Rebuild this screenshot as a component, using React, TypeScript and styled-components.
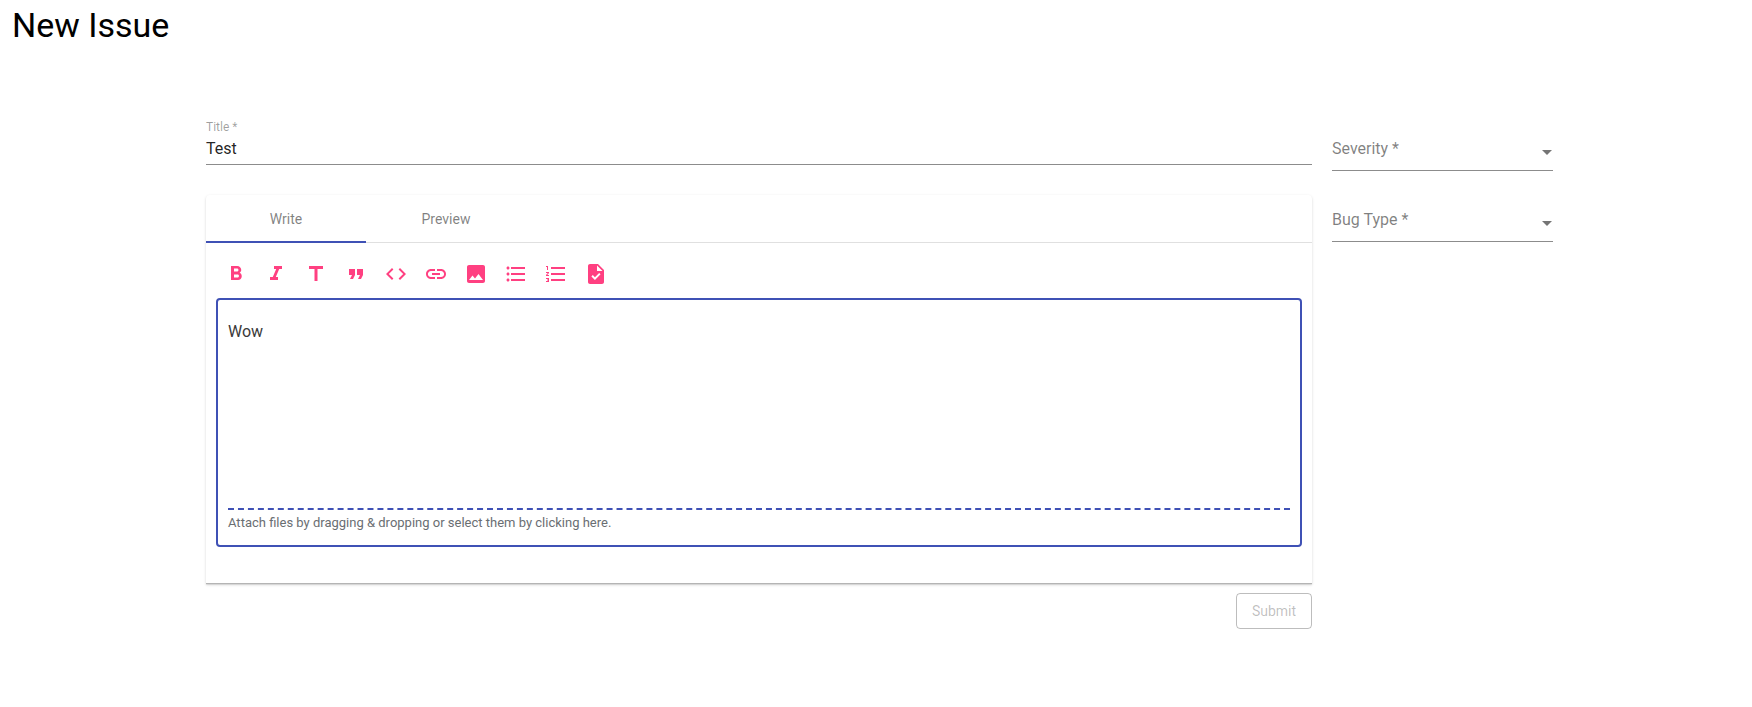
import React from "react";
import styled, { createGlobalStyle } from "styled-components";
import {
  MdFormatBold,
  MdFormatItalic,
  MdTitle,
  MdFormatQuote,
  MdCode,
  MdLink,
  MdImage,
  MdFormatListBulleted,
  MdFormatListNumbered,
  MdTask,
  MdArrowDropDown,
} from "react-icons/md";

const GlobalStyle = createGlobalStyle`
  html, body {
    margin: 0;
    padding: 0;
    background: #fff;
    font-family: Roboto, "Liberation Sans", sans-serif;
  }
`;

const tools = [
  MdFormatBold,
  MdFormatItalic,
  MdTitle,
  MdFormatQuote,
  MdCode,
  MdLink,
  MdImage,
  MdFormatListBulleted,
  MdFormatListNumbered,
  MdTask,
];

export default function App() {
  return (
    <SPage>
      <GlobalStyle />
      <SHeading>New Issue</SHeading>
      <SForm>
        <SMain>
          <STitleField>
            <STitleLabel>Title *</STitleLabel>
            <STitleValue>Test</STitleValue>
          </STitleField>
          <SCard>
            <STabs>
              <STab $active>Write</STab>
              <STab>Preview</STab>
            </STabs>
            <SToolbar>
              {tools.map((Icon, i) => (
                <SToolButton key={i}>
                  <Icon size={24} />
                </SToolButton>
              ))}
            </SToolbar>
            <SEditor>
              <SEditorText>Wow</SEditorText>
              <SAttach>Attach files by dragging &amp; dropping or select them by clicking here.</SAttach>
            </SEditor>
          </SCard>
          <SActions>
            <SSubmit disabled>Submit</SSubmit>
          </SActions>
        </SMain>
        <SSide>
          <SSelect>
            <span>Severity *</span>
            <MdArrowDropDown size={24} />
          </SSelect>
          <SSelect>
            <span>Bug Type *</span>
            <MdArrowDropDown size={24} />
          </SSelect>
        </SSide>
      </SForm>
    </SPage>
  );
}

const SPage = styled.div`
  width: 1752px;
  height: 707px;
  overflow: hidden;
`;

const SHeading = styled.h1`
  margin: 0;
  padding: 5px 0 0 12px;
  font-size: 34px;
  font-weight: 400;
  line-height: 40px;
  color: #000;
`;

const SForm = styled.div`
  display: flex;
  gap: 20px;
  margin-top: 73px;
  padding-left: 206px;
`;

const SMain = styled.div`
  width: 1106px;
`;

const STitleField = styled.div`
  height: 47px;
  padding-top: 2px;
  border-bottom: 1px solid #8c8c8c;
  box-sizing: border-box;
`;

const STitleLabel = styled.div`
  font-size: 12px;
  line-height: 14px;
  color: rgba(0, 0, 0, 0.38);
`;

const STitleValue = styled.div`
  margin-top: 5px;
  font-size: 16px;
  line-height: 19px;
  color: rgba(0, 0, 0, 0.87);
`;

const SCard = styled.div`
  margin-top: 30px;
  height: 389px;
  box-sizing: border-box;
  background: #fff;
  box-shadow: 0 1px 3px rgba(0, 0, 0, 0.14), 0 1px 1px rgba(0, 0, 0, 0.08);
  border-radius: 4px 4px 0 0;
  border-bottom: 1px solid #b4b4b4;
`;

const STabs = styled.div`
  display: flex;
  height: 48px;
  box-sizing: border-box;
  border-bottom: 1px solid #e0e0e0;
`;

const STab = styled.div<{ $active?: boolean }>`
  width: 160px;
  height: 48px;
  padding-top: 2px;
  box-sizing: border-box;
  display: flex;
  align-items: center;
  justify-content: center;
  font-size: 14px;
  color: rgba(0, 0, 0, 0.5);
  border-bottom: 2px solid ${(p) => (p.$active ? "#3f51b5" : "transparent")};
`;

const SToolbar = styled.div`
  display: flex;
  gap: 16px;
  padding: 19px 0 0 18px;
  height: 36px;
`;

const SToolButton = styled.span`
  display: flex;
  width: 24px;
  height: 24px;
  color: #ff4081;
`;

const SEditor = styled.div`
  margin: 0 10px;
  height: 249px;
  box-sizing: border-box;
  border: 2px solid #3f51b5;
  border-radius: 4px;
  padding: 22px 10px 0;
  display: flex;
  flex-direction: column;
`;

const SEditorText = styled.div`
  flex: 1;
  font-size: 16px;
  line-height: 19px;
  color: #3a3a3a;
`;

const SAttach = styled.div`
  height: 37px;
  box-sizing: border-box;
  border-top: 2px dashed #3f51b5;
  padding-top: 5px;
  font-size: 13px;
  line-height: 15px;
  color: #6a6e72;
`;

const SActions = styled.div`
  display: flex;
  justify-content: flex-end;
  margin-top: 9px;
`;

const SSubmit = styled.button`
  width: 76px;
  height: 36px;
  background: transparent;
  border: 1px solid rgba(0, 0, 0, 0.26);
  border-radius: 4px;
  font-family: Roboto, sans-serif;
  font-size: 14px;
  color: rgba(0, 0, 0, 0.26);
`;

const SSide = styled.div`
  width: 221px;
  display: flex;
  flex-direction: column;
  gap: 34px;
  padding-top: 16px;
`;

const SSelect = styled.div`
  height: 37px;
  padding-bottom: 8px;
  box-sizing: border-box;
  display: flex;
  align-items: center;
  justify-content: space-between;
  border-bottom: 1px solid #8c8c8c;
  font-size: 16px;
  color: rgba(0, 0, 0, 0.5);

  svg {
    margin: 8px -6px 0 0;
    color: rgba(0, 0, 0, 0.54);
  }
`;
